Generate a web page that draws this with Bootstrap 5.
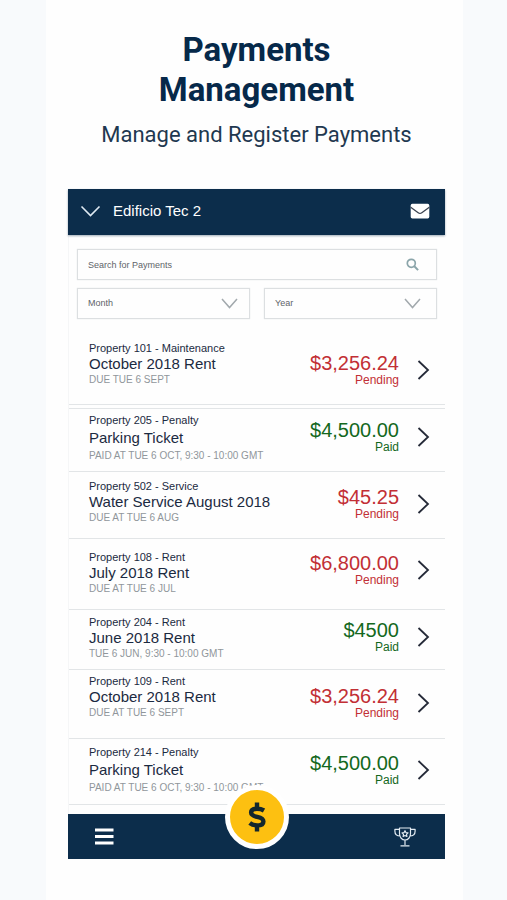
<!DOCTYPE html>
<html lang="en">
<head>
<meta charset="utf-8">
<meta name="viewport" content="width=device-width, initial-scale=1">
<title>Payments Management</title>
<link href="https://cdn.jsdelivr.net/npm/bootstrap@5.3.0/dist/css/bootstrap.min.css" rel="stylesheet">
<style>
  body { background: #f8fafc; font-family: "Liberation Sans", Arial, sans-serif; color: #1b2a41; padding: 0 44px 0 46px; }
  .sheet { background: #fefefe; padding: 30px 18px 41px 22px; }
  .promo { font-family: Roboto, sans-serif; color: #06294a; }
  .promo h1 { font-size: 33px; line-height: 40px; font-weight: 700; }
  .promo p { font-size: 22px; line-height: 30px; color: #1f3850; margin: 10px 0 39px; }
  .app { border-left: 1px solid #f5f6f7; }
  .bar { background: #0c2d4b; color: #fff; margin-left: -1px; }
  .top-bar { height: 46px; padding: 0 15px 2px 12px; box-shadow: 0 1px 2px #0c2d4b66; }
  .place { font-size: 15px; line-height: 20px; gap: 12px; color: #e8eef4; }
  .bar svg, .filters svg, .pay svg { display: block; flex: none; }
  .filters { padding: 14px 8px 0; gap: 8px; }
  .field { display: grid; align-items: center; height: 31px; border: 1px solid #dcdfe1; box-shadow: 0 0 1px #dcdfe1; }
  .field > * { grid-area: 1 / 1; }
  .field input, .field select { appearance: none; width: 100%; height: 100%; border: 0; background: transparent; padding: 0 10px; font-size: 9px; color: #5f6469; }
  .field input::placeholder { color: #5f6469; opacity: 1; }
  .field svg { justify-self: end; pointer-events: none; margin-right: 11px; }
  .field .find { margin-right: 17px; }
  .field .wide { margin-right: 15px; }
  .picks { gap: 14px; }
  .picks .field { flex: 1 1 0; min-width: 0; }
  .pay { border-bottom: 1px solid #e2e5e7; color: inherit; padding: var(--top) 15px var(--bottom) 20px; }
  .unit { font-size: 11px; line-height: 14px; }
  .what { font-size: 15px; line-height: 18px; }
  .when { font-size: 10px; line-height: 14px; color: #90969b; }
  .roomy { display: grid; row-gap: 2px; }
  .due { gap: 18px; margin-top: var(--drop); }
  .sum { font-size: 20px; line-height: 20px; }
  .state { font-size: 12px; line-height: 14px; }
  .pending { color: #c22f35; }
  .paid { color: #14681d; }
  .r-first { --top: 22px; --bottom: 17px; --drop: 12px; }
  .r-ticket { --top: 4px; --bottom: 8px; --drop: 7px; border-top: 1px solid #e2e5e7; margin-top: 3px; }
  .r-water { --top: 7px; --bottom: 13px; --drop: 8px; }
  .r-july { --top: 11px; --bottom: 13px; --drop: 3px; }
  .r-june { --top: 5px; --bottom: 8px; --drop: 5px; }
  .r-october { --top: 4px; --bottom: 18px; --drop: 12px; }
  .r-last { --top: 6px; --bottom: 9px; --drop: 8px; }
  .bottom-bar { height: 45px; margin-top: 9px; padding: 0 29px 0 26px; position: relative; }
  .plain { background: none; border: 0; padding: 0; color: inherit; }
  .coin { position: absolute; left: 50%; top: -29px; transform: translateX(-50%); width: 64px; height: 64px; border: 5px solid #fff; border-radius: 50%; background: #fdc011; padding: 0; }
  .coin svg { margin: auto; }
</style>
</head>
<body>
<main class="sheet">
  <header class="promo text-center">
    <h1 class="mb-0">Payments<br>Management</h1>
    <p>Manage and Register Payments</p>
  </header>
  <section class="app">
    <div class="bar top-bar d-flex align-items-center justify-content-between">
      <button type="button" class="plain place d-flex align-items-center">
        <svg width="21" height="12" viewBox="0 0 21 12" fill="none" stroke="#dfe9f2" stroke-width="1.6"><path d="M1.500 1.500 10.500 10.500 19.500 1.500"/></svg>
        <span>Edificio Tec 2</span>
      </button>
      <button type="button" class="plain" aria-label="Messages">
        <svg width="20" height="16" viewBox="0 0 20 16"><rect x=".7" y=".8" width="18.600" height="14.600" rx="1.600" fill="#fff"/><path d="M.7 4.300 8.200 9.700q1.800 1.300 3.600 0L19.300 4.300" fill="none" stroke="#3b4350" stroke-width="1.300"/></svg>
      </button>
    </div>

    <form class="filters d-flex flex-column">
      <div class="field">
        <input type="text" placeholder="Search for Payments" aria-label="Search for Payments">
        <svg class="find" width="13" height="13" viewBox="0 0 13 13" fill="none" stroke="#8ba5aa"><circle cx="5.300" cy="5.300" r="4" stroke-width="1.700"/><path d="m8.300 8.300 3.800 3.800" stroke-width="2"/></svg>
      </div>
      <div class="picks d-flex">
        <div class="field">
          <select aria-label="Month"><option>Month</option></select>
          <svg width="17" height="11" viewBox="0 0 17 11" fill="none" stroke="#a2a9ad" stroke-width="1.500"><path d="m1 1 7.500 8.500L16 1"/></svg>
        </div>
        <div class="field">
          <select aria-label="Year"><option>Year</option></select>
          <svg class="wide" width="17" height="11" viewBox="0 0 17 11" fill="none" stroke="#a2a9ad" stroke-width="1.500"><path d="m1 1 7.500 8.500L16 1"/></svg>
        </div>
      </div>
    </form>

    <div class="list">
      <a href="#" class="pay r-first d-flex justify-content-between align-items-start text-decoration-none">
        <div><div class="unit">Property 101 - Maintenance</div><div class="what">October 2018 Rent</div><div class="when">DUE TUE 6 SEPT</div></div>
        <div class="due d-flex align-items-center"><div class="pending text-end"><div class="sum">$3,256.24</div><div class="state">Pending</div></div><svg width="13" height="20" viewBox="0 0 13 20" fill="none" stroke="#252a38" stroke-width="1.800"><path d="m1.500 1 9.500 9-9.500 9"/></svg></div>
      </a>
      <a href="#" class="pay r-ticket d-flex justify-content-between align-items-start text-decoration-none">
        <div class="roomy"><div class="unit">Property 205 - Penalty</div><div class="what">Parking Ticket</div><div class="when">PAID AT TUE 6 OCT, 9:30 - 10:00 GMT</div></div>
        <div class="due d-flex align-items-center"><div class="paid text-end"><div class="sum">$4,500.00</div><div class="state">Paid</div></div><svg width="13" height="20" viewBox="0 0 13 20" fill="none" stroke="#252a38" stroke-width="1.800"><path d="m1.500 1 9.500 9-9.500 9"/></svg></div>
      </a>
      <a href="#" class="pay r-water d-flex justify-content-between align-items-start text-decoration-none">
        <div><div class="unit">Property 502 - Service</div><div class="what">Water Service August 2018</div><div class="when">DUE AT TUE 6 AUG</div></div>
        <div class="due d-flex align-items-center"><div class="pending text-end"><div class="sum">$45.25</div><div class="state">Pending</div></div><svg width="13" height="20" viewBox="0 0 13 20" fill="none" stroke="#252a38" stroke-width="1.800"><path d="m1.500 1 9.500 9-9.500 9"/></svg></div>
      </a>
      <a href="#" class="pay r-july d-flex justify-content-between align-items-start text-decoration-none">
        <div><div class="unit">Property 108 - Rent</div><div class="what">July 2018 Rent</div><div class="when">DUE AT TUE 6 JUL</div></div>
        <div class="due d-flex align-items-center"><div class="pending text-end"><div class="sum">$6,800.00</div><div class="state">Pending</div></div><svg width="13" height="20" viewBox="0 0 13 20" fill="none" stroke="#252a38" stroke-width="1.800"><path d="m1.500 1 9.500 9-9.500 9"/></svg></div>
      </a>
      <a href="#" class="pay r-june d-flex justify-content-between align-items-start text-decoration-none">
        <div><div class="unit">Property 204 - Rent</div><div class="what">June 2018 Rent</div><div class="when">TUE 6 JUN, 9:30 - 10:00 GMT</div></div>
        <div class="due d-flex align-items-center"><div class="paid text-end"><div class="sum">$4500</div><div class="state">Paid</div></div><svg width="13" height="20" viewBox="0 0 13 20" fill="none" stroke="#252a38" stroke-width="1.800"><path d="m1.500 1 9.500 9-9.500 9"/></svg></div>
      </a>
      <a href="#" class="pay r-october d-flex justify-content-between align-items-start text-decoration-none">
        <div><div class="unit">Property 109 - Rent</div><div class="what">October 2018 Rent</div><div class="when">DUE AT TUE 6 SEPT</div></div>
        <div class="due d-flex align-items-center"><div class="pending text-end"><div class="sum">$3,256.24</div><div class="state">Pending</div></div><svg width="13" height="20" viewBox="0 0 13 20" fill="none" stroke="#252a38" stroke-width="1.800"><path d="m1.500 1 9.500 9-9.500 9"/></svg></div>
      </a>
      <a href="#" class="pay r-last d-flex justify-content-between align-items-start text-decoration-none">
        <div class="roomy"><div class="unit">Property 214 - Penalty</div><div class="what">Parking Ticket</div><div class="when">PAID AT TUE 6 OCT, 9:30 - 10:00 GMT</div></div>
        <div class="due d-flex align-items-center"><div class="paid text-end"><div class="sum">$4,500.00</div><div class="state">Paid</div></div><svg width="13" height="20" viewBox="0 0 13 20" fill="none" stroke="#252a38" stroke-width="1.800"><path d="m1.500 1 9.500 9-9.500 9"/></svg></div>
      </a>
    </div>

    <nav class="bar bottom-bar d-flex align-items-center justify-content-between" aria-label="Main">
      <button type="button" class="plain" aria-label="Menu">
        <svg width="20" height="17" viewBox="0 0 20 17" fill="#fff"><path d="M1 .5h18.500v3H1zM1 7h18.500v3H1zM1 13.500h18.500v3H1z"/></svg>
      </button>
      <button type="button" class="coin" aria-label="Register payment">
        <svg width="20" height="32" viewBox="0 0 20 32" fill="none" stroke="#13272d" stroke-width="4.400"><path d="M17 9.500C15 8.300 12.300 7.700 10 7.700c-3.600 0-5.900 1.400-5.900 3.900 0 5.800 12.300 2.900 12.300 8.800 0 2.600-2.600 4-6.200 4-2.900 0-5.600-.8-7.500-2.300"/><path d="M10 1.500v6M10 24.500v6"/></svg>
      </button>
      <button type="button" class="plain" aria-label="Rewards">
        <svg width="22" height="20" viewBox="0 0 22 20" fill="none" stroke="#e3ebf2" stroke-width="1.200" stroke-linejoin="round"><path d="M5.500 1h11v5.500c0 4-2.600 6.500-5.500 6.500s-5.500-2.500-5.500-6.500zM5.500 2.300H.9v1.900c0 3 2 4.800 5.600 4.800M16.500 2.300h4.600v1.900c0 3-2 4.800-5.600 4.800M11 13v5M6.500 18.800h9"/><path d="m11 3.700.9 1.900 2.100.3-1.500 1.500.4 2.100-1.900-1-1.900 1 .4-2.100L8 5.900l2.100-.3z"/></svg>
      </button>
    </nav>
  </section>
</main>
<script src="https://cdn.jsdelivr.net/npm/bootstrap@5.3.0/dist/js/bootstrap.bundle.min.js"></script>
</body>
</html>
